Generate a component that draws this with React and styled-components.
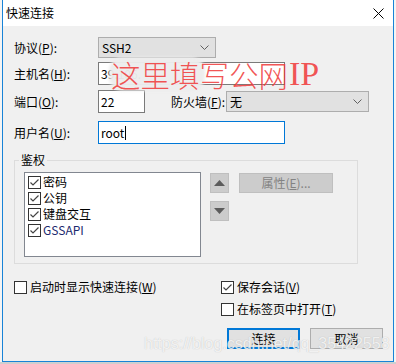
import React from 'react';
import styled, { createGlobalStyle } from 'styled-components';

const Global = createGlobalStyle`
  html, body { margin: 0; padding: 0; background: #ececec; }
  body {
    font-family: "Noto Sans CJK SC", "Noto Sans", sans-serif;
    font-size: 12px;
    color: #000;
  }
`;

const Page = styled.div`
  width: 396px;
  height: 364px;
  padding-left: 2px;
  box-sizing: border-box;
  overflow: hidden;
  background: linear-gradient(to bottom, #f4f4f4 0, #f4f4f4 362px, #cfcfcf 362px);
`;

const Window = styled.div`
  position: relative;
  width: 392px;
  height: 362px;
  box-sizing: border-box;
  border: 1px solid #1883d7;
  border-top: none;
  background: #f0f0f0;
  display: flex;
  flex-direction: column;
  overflow: hidden;
`;

const TitleBar = styled.div`
  height: 26px;
  flex: none;
  background: #fff;
  display: flex;
  align-items: center;
  justify-content: space-between;
  padding: 0 9px 0 3px;
`;

const Title = styled.span`
  font-size: 12px;
  line-height: 16px;
`;

const Body = styled.div`
  display: flex;
  flex-direction: column;
  padding-left: 11px;
`;

const Row = styled.div`
  display: flex;
  align-items: center;
  height: ${p => p.$h}px;
  margin-top: ${p => p.$mt}px;
`;

const Label = styled.span`
  flex: none;
  width: ${p => p.$w}px;
  margin-left: ${p => p.$ml || 0}px;
  line-height: 16px;
  white-space: nowrap;
`;

const Key = styled.span`
  text-decoration: underline;
  text-underline-offset: 1px;
`;

const Combo = styled.div`
  flex: none;
  width: ${p => p.$w}px;
  height: 21px;
  box-sizing: border-box;
  border: 1px solid #adadad;
  background: #e1e1e1;
  display: flex;
  align-items: center;
  justify-content: space-between;
  padding: 0 6px 0 3px;
  line-height: 16px;
`;

const TextBox = styled.div`
  flex: none;
  width: ${p => p.$w}px;
  height: 23px;
  box-sizing: border-box;
  border: 1px solid ${p => (p.$focus ? '#0078d7' : '#7a7a7a')};
  background: #fff;
  display: flex;
  align-items: center;
  padding-left: 2px;
  line-height: 16px;
  overflow: hidden;
  white-space: nowrap;
`;

const Caret = styled.span`
  display: inline-block;
  width: 1px;
  height: 14px;
  background: #000;
  margin-left: 1px;
`;

const Group = styled.fieldset`
  margin: 8px 0 0 0;
  width: 344px;
  box-sizing: border-box;
  border: 1px solid #dcdcdc;
  padding: 4px 0 6px 9px;
  min-width: 0;
  display: flex;
  align-items: flex-start;
`;

const Legend = styled.legend`
  padding: 0 2px;
  margin-left: -5px;
  line-height: 16px;
  font-size: 12px;
`;

const ListBox = styled.div`
  flex: none;
  width: 177px;
  height: 85px;
  box-sizing: border-box;
  border: 1px solid #828790;
  background: #fff;
  padding: 1px 0 0 3px;
  display: flex;
  flex-direction: column;
`;

const ListItem = styled.div`
  display: flex;
  align-items: center;
  height: 16px;
  gap: 2px;
  color: ${p => (p.$latin ? '#1b2a6e' : '#000')};
  line-height: 16px;
`;

const Box = styled.span`
  flex: none;
  width: 13px;
  height: 13px;
  box-sizing: border-box;
  border: 1px solid #333;
  background: #fff;
  display: flex;
  align-items: center;
  justify-content: center;
`;

const ArrowCol = styled.div`
  flex: none;
  margin-left: 9px;
  margin-top: 1px;
  display: flex;
  flex-direction: column;
  gap: 8px;
`;

const ArrowBtn = styled.div`
  width: 19px;
  height: 20px;
  box-sizing: border-box;
  border: 1px solid #bfbfbf;
  background: #cccccc;
  display: flex;
  align-items: center;
  justify-content: center;
`;

const PropBtn = styled.div`
  flex: none;
  margin-left: 10px;
  margin-top: 1px;
  width: 94px;
  height: 20px;
  box-sizing: border-box;
  border: 1px solid #bfbfbf;
  background: #cccccc;
  color: #838383;
  display: flex;
  align-items: center;
  justify-content: center;
  line-height: 16px;
`;

const Bottom = styled.div`
  display: grid;
  grid-template-columns: 207px 1fr;
  margin-top: 15px;
`;

const Col = styled.div`
  display: flex;
  flex-direction: column;
  gap: 6px;
`;

const CheckRow = styled.label`
  display: flex;
  align-items: center;
  height: 16px;
  gap: 3px;
  line-height: 16px;
  white-space: nowrap;
`;

const Buttons = styled.div`
  display: flex;
  gap: 10px;
  margin: 5px 0 0 6px;
`;

const Button = styled.div`
  width: 73px;
  height: 21px;
  box-sizing: border-box;
  border: ${p => (p.$default ? '2px solid #0078d7' : '1px solid #adadad')};
  background: #e1e1e1;
  display: flex;
  align-items: center;
  justify-content: center;
  line-height: 16px;
`;

const Annotation = styled.div`
  position: absolute;
  left: 108px;
  top: 59px;
  display: flex;
  align-items: center;
  color: rgba(240, 62, 62, 0.88);
  font-size: 29.5px;
  line-height: 30px;
  font-weight: 300;
  white-space: nowrap;
`;

const Blob = styled.div`
  position: absolute;
  left: 106px;
  top: 57px;
  width: 96px;
  height: 34px;
  border-radius: 14px;
  background: rgba(236, 236, 236, 0.96);
  filter: blur(1.5px);
`;

const Latin = styled.span`
  font-family: "Liberation Serif", serif;
  font-size: 34px;
  margin-left: 1px;
`;

const Watermark = styled.div`
  position: absolute;
  left: 141px;
  top: 335px;
  font-family: "Liberation Sans", Arial, sans-serif;
  font-size: 16px;
  line-height: 18px;
  color: rgba(255, 255, 255, 0.8);
  text-shadow: 0 0 1px rgba(120, 120, 120, 0.45);
  white-space: nowrap;
  pointer-events: none;
`;

const Chevron = () => (
  <svg width="9" height="5" viewBox="0 0 9 5">
    <polyline points="0.5,0.5 4.5,4.5 8.5,0.5" fill="none" stroke="#606060" strokeWidth="1" />
  </svg>
);

const Check = ({ on }) => (
  <Box>
    {on && (
      <svg width="11" height="11" viewBox="0 0 11 11">
        <polyline points="1.5,5.5 4,8 9.5,2.5" fill="none" stroke="#444" strokeWidth="1.2" />
      </svg>
    )}
  </Box>
);

const CloseIcon = () => (
  <svg width="11" height="11" viewBox="0 0 11 11">
    <line x1="0.5" y1="0.5" x2="10.5" y2="10.5" stroke="#000" strokeWidth="1" />
    <line x1="10.5" y1="0.5" x2="0.5" y2="10.5" stroke="#000" strokeWidth="1" />
  </svg>
);

const Tri = ({ up }) => (
  <svg width="11" height="6" viewBox="0 0 11 6">
    <polygon points={up ? '0,6 5.5,0 11,6' : '0,0 5.5,6 11,0'} fill="#5c5c5c" />
  </svg>
);

export default function App() {
  const auths = [
    { t: '密码' },
    { t: '公钥' },
    { t: '键盘交互' },
    { t: 'GSSAPI', latin: true },
  ];
  return (
    <>
      <Global />
      <Page>
        <Window>
          <TitleBar>
            <Title>快速连接</Title>
            <CloseIcon />
          </TitleBar>
          <Body>
            <Row $h={21} $mt={11}>
              <Label $w={84}>协议(<Key>P</Key>):</Label>
              <Combo $w={118}>
                <span>SSH2</span>
                <Chevron />
              </Combo>
            </Row>
            <Row $h={23} $mt={4}>
              <Label $w={84}>主机名(<Key>H</Key>):</Label>
              <TextBox $w={187}>39.106.</TextBox>
            </Row>
            <Row $h={23} $mt={5}>
              <Label $w={84}>端口(<Key>O</Key>):</Label>
              <TextBox $w={47}>22</TextBox>
              <Label $w={55} $ml={26}>防火墙(<Key>F</Key>):</Label>
              <Combo $w={143}>
                <span>无</span>
                <Chevron />
              </Combo>
            </Row>
            <Row $h={23} $mt={8}>
              <Label $w={84}>用户名(<Key>U</Key>):</Label>
              <TextBox $w={187} $focus>
                root<Caret />
              </TextBox>
            </Row>
            <Group>
              <Legend>鉴权</Legend>
              <ListBox>
                {auths.map(a => (
                  <ListItem key={a.t} $latin={a.latin}>
                    <Check on />
                    <span>{a.t}</span>
                  </ListItem>
                ))}
              </ListBox>
              <ArrowCol>
                <ArrowBtn><Tri up /></ArrowBtn>
                <ArrowBtn><Tri /></ArrowBtn>
              </ArrowCol>
              <PropBtn>属性(<Key>E</Key>)...</PropBtn>
            </Group>
            <Bottom>
              <Col>
                <CheckRow>
                  <Check />
                  <span>启动时显示快速连接(<Key>W</Key>)</span>
                </CheckRow>
              </Col>
              <Col>
                <CheckRow>
                  <Check on />
                  <span>保存会话(<Key>V</Key>)</span>
                </CheckRow>
                <CheckRow>
                  <Check />
                  <span>在标签页中打开(<Key>T</Key>)</span>
                </CheckRow>
                <Buttons>
                  <Button $default>连接</Button>
                  <Button>取消</Button>
                </Buttons>
              </Col>
            </Bottom>
          </Body>
          <Blob />
          <Annotation>
            这里填写公网<Latin>IP</Latin>
          </Annotation>
          <Watermark>https://blog.csdn.net/qq_35422558</Watermark>
        </Window>
      </Page>
    </>
  );
}
